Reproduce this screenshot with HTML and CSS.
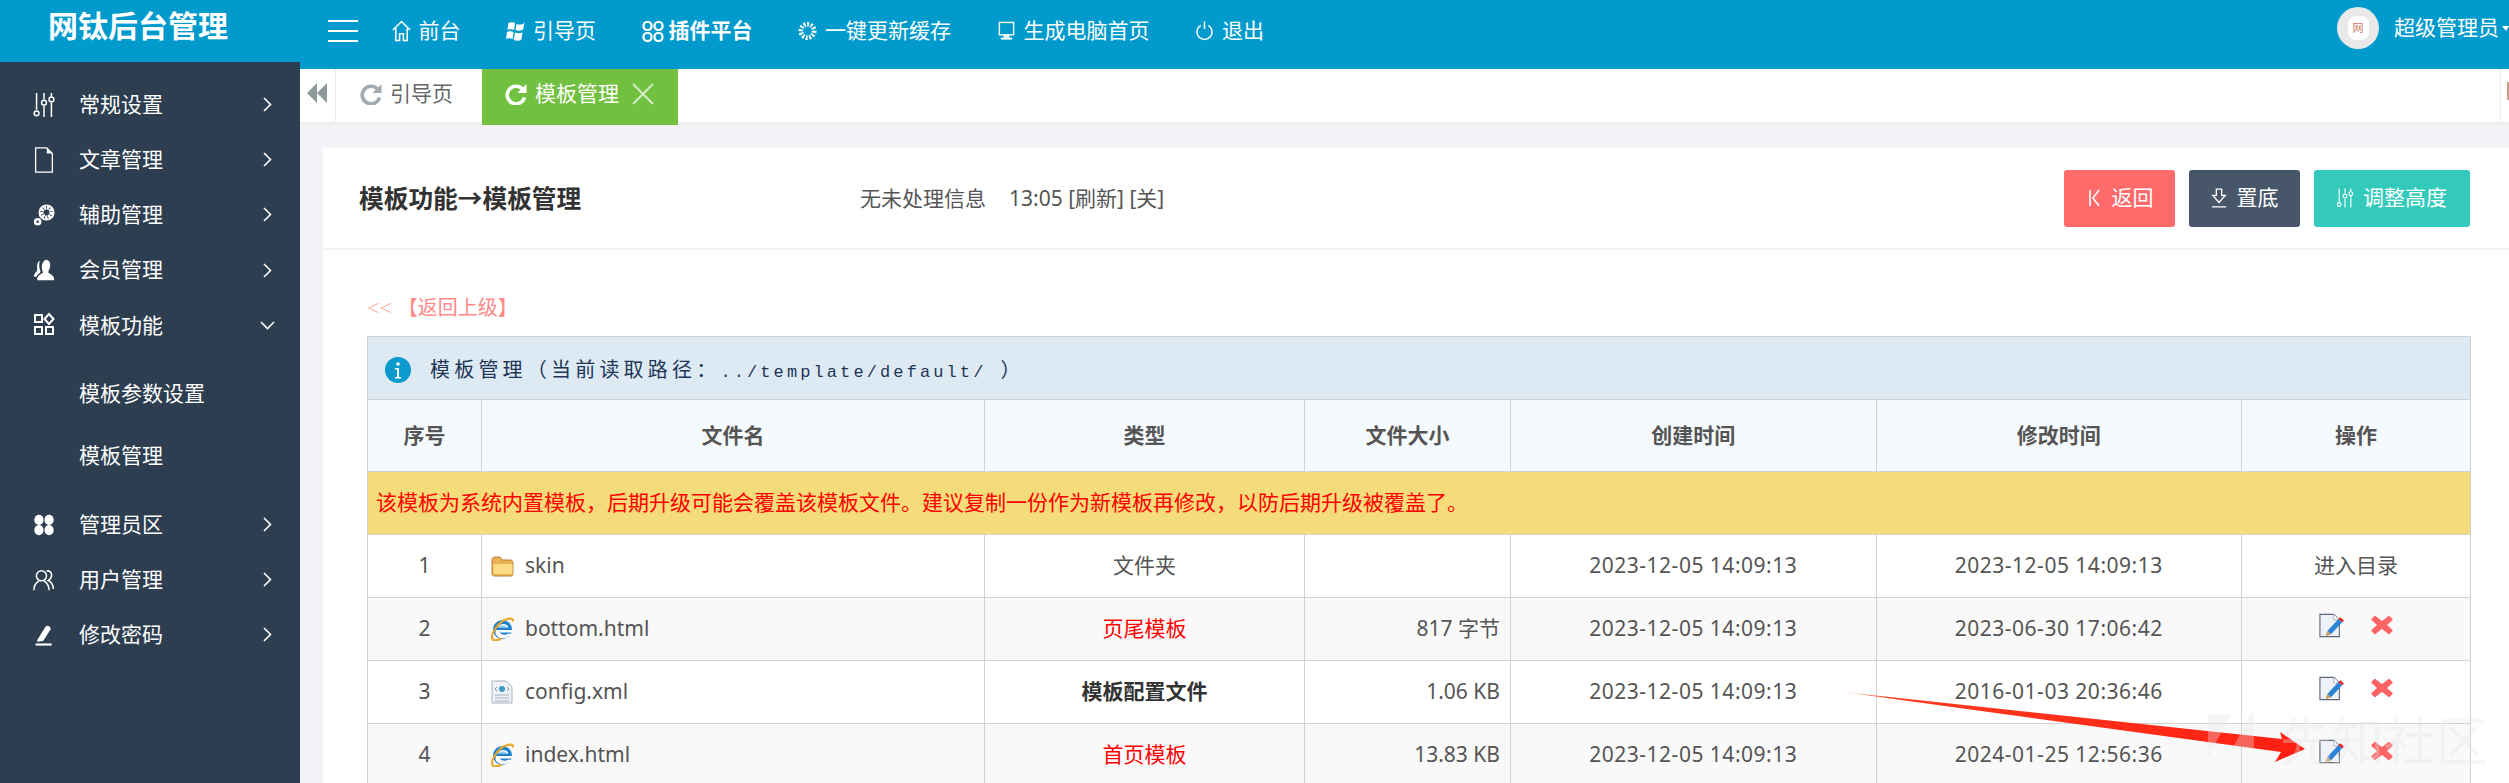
FILE: index.html

```html
<!DOCTYPE html>
<html>
<head>
  <meta charset="utf-8">
  <title>网钛后台管理</title>
  <link rel="stylesheet" href="styles.css">
</head>
<body>
  <svg class="defs" width="0" height="0">
    <defs>
      <symbol id="i-sliders" viewBox="0 0 22 28">
        <g fill="none" stroke="currentColor" stroke-width="1.6">
          <path d="M3 1v18M11 1v7M11 15v12M19 1v4M19 11v16"/>
          <circle cx="3" cy="23" r="2.6"/><circle cx="11" cy="11.5" r="2.6"/><circle cx="19" cy="8" r="2.6"/>
        </g>
      </symbol>
      <symbol id="i-refresh" viewBox="0 0 22 22">
        <path d="M17.500 6A8.800 8.800 0 1 0 19.500 14.500" fill="none" stroke="currentColor" stroke-width="3.600"/>
        <path d="M21.500 1v9h-9z" fill="currentColor"/>
      </symbol>
      <symbol id="i-ie" viewBox="0 0 24 24">
        <circle cx="12.500" cy="12.500" r="9.500" fill="#1c7fd0"/>
        <path d="M8 10.500c1-4.500 9-5 10.500 0z" fill="#fff"/>
        <path d="M8 10.500c1.500-2.500 7.500-3 9 0z" fill="#7cc8f2"/>
        <path d="M6 13h17c-.5 1.500-.5 2-1 2.500H10c1 2.500 6 3 8.500 1l3 .5c-3 5-11 6-15 1.500-1.500-1.500-1-4-.5-5.500z" fill="#fff"/>
        <path d="M2.500 22.500C0 18 8 5 16 2.500c4-1.500 7.500-1.500 7 2" fill="none" stroke="#eaa62f" stroke-width="2.200"/>
        <path d="M2.500 22.500c2 1.500 6 .5 9-1" fill="none" stroke="#eaa62f" stroke-width="2.200"/>
      </symbol>
      <symbol id="i-edit" viewBox="0 0 27 26">
        <path d="M1 1h15l6 6v18H1z" fill="#eef2f8" stroke="#5d6775" stroke-width="1.200"/>
        <path d="M16 1v6h6" fill="#fff" stroke="#a9b2bd" stroke-width="1"/>
        <path d="M9 19l12-13 4 3.500-12 13z" fill="#2b83d8"/>
        <path d="M21 6l2-2 4 3.500-2 2z" fill="#e8211f"/>
        <path d="M9 19l4 3.500-6 2z" fill="#c9985a"/>
      </symbol>
      <symbol id="i-del" viewBox="0 0 22 20">
        <path d="M4 1.500l7 5.500 7-5.500 3 3-6 5.500 6 5.500-3 3-7-5.500-7 5.500-3-3 6-5.500-6-5.500z" fill="#ff6363" stroke="#ff6363" stroke-width="1.500" stroke-linejoin="round"/>
      </symbol>
    </defs>
  </svg>

  <div class="side-col">
    <div class="logo">网钛后台管理</div>
    <ul class="side-menu">
      <li class="side-item">
        <svg class="side-icon"><use href="#i-sliders"/></svg>常规设置
        <svg class="chev" viewBox="0 0 9 15"><path d="M1 1l6.500 6.500L1 14"/></svg>
      </li>
      <li class="side-item">
        <svg class="side-icon" viewBox="0 0 22 28"><path d="M2 1h12l6 6v20H2z" fill="none" stroke="currentColor" stroke-width="1.400"/><path d="M14 1v6h6" fill="currentColor"/></svg>文章管理
        <svg class="chev" viewBox="0 0 9 15"><path d="M1 1l6.500 6.500L1 14"/></svg>
      </li>
      <li class="side-item">
        <svg class="side-icon" viewBox="0 0 26 26"><circle cx="16" cy="10" r="6" fill="none" stroke="currentColor" stroke-width="5" stroke-dasharray="3 1"/><circle cx="16" cy="10" r="8.500" fill="none" stroke="currentColor" stroke-width="2"/><circle cx="5.500" cy="21" r="3" fill="none" stroke="currentColor" stroke-width="3"/></svg>辅助管理
        <svg class="chev" viewBox="0 0 9 15"><path d="M1 1l6.500 6.500L1 14"/></svg>
      </li>
      <li class="side-item">
        <svg class="side-icon" viewBox="0 0 26 26"><path d="M15 1c5 0 6 5 5 9-1 3-2 5-2 6 2 2 7 3 7 8v1H5v-1c0-5 5-6 7-8-2-3-3-12 3-15z" fill="currentColor"/><path d="M8 2C4 4 5 10 5 13c-1 3-4 4-4 8h3c1-3 4-4 5-6-2-4-2-9-1-13z" fill="currentColor"/></svg>会员管理
        <svg class="chev" viewBox="0 0 9 15"><path d="M1 1l6.500 6.500L1 14"/></svg>
      </li>
      <li class="side-item">
        <svg class="side-icon" viewBox="0 0 22 26"><g fill="none" stroke="currentColor" stroke-width="2"><rect x="2" y="3" width="7" height="7"/><path d="M16 2l4.500 5-4.500 5-4.500-5z"/><rect x="2" y="15" width="7" height="7"/><rect x="13" y="15" width="7" height="7"/></g></svg>模板功能
        <svg class="chev chev-down" viewBox="0 0 15 9"><path d="M1 1l6.500 6.500L14 1"/></svg>
      </li>
      <li class="side-sub">
        <a class="sub-link">模板参数设置</a>
        <a class="sub-link">模板管理</a>
      </li>
      <li class="side-item">
        <svg class="side-icon" viewBox="0 0 26 26"><g fill="currentColor"><ellipse cx="7" cy="7" rx="5.500" ry="6"/><ellipse cx="19" cy="7" rx="5.500" ry="6"/><ellipse cx="7" cy="19" rx="5.500" ry="6"/><ellipse cx="19" cy="19" rx="5.500" ry="6"/></g></svg>管理员区
        <svg class="chev" viewBox="0 0 9 15"><path d="M1 1l6.500 6.500L1 14"/></svg>
      </li>
      <li class="side-item">
        <svg class="side-icon" viewBox="0 0 26 26"><g fill="none" stroke="currentColor" stroke-width="1.800"><circle cx="10" cy="8" r="6"/><path d="M1 25c0-6 3-9 6-11M13 14c3 2 6 5 6 11M16 2.500c3-1 6 1 6 5s-2 5-4 6c3 1 6 5 6 10"/></g></svg>用户管理
        <svg class="chev" viewBox="0 0 9 15"><path d="M1 1l6.500 6.500L1 14"/></svg>
      </li>
      <li class="side-item">
        <svg class="side-icon" viewBox="0 0 26 26"><path d="M5 19L15 3c2-2 6 0 6 3L12 20l-7 1z" fill="currentColor"/><rect x="3" y="23" width="19" height="2.500" fill="currentColor"/></svg>修改密码
        <svg class="chev" viewBox="0 0 9 15"><path d="M1 1l6.500 6.500L1 14"/></svg>
      </li>
    </ul>
  </div>

  <div class="main-col">
    <div class="topnav">
      <div class="burger"><span></span><span></span><span></span></div>
      <a class="nav-link">
        <svg class="nav-icon" viewBox="0 0 20 24"><path d="M1 11L10 2l9 9M4 9v13h4v-7h4v7h4V9" fill="none" stroke="currentColor" stroke-width="1.600"/></svg>前台
      </a>
      <a class="nav-link">
        <svg class="nav-icon" viewBox="0 0 20 24"><path d="M2.500 3.500c2-1 5-1 7 0L8.500 11c-2-1-5-1-7 0zM11 4.500c2 1 5 1 7 0l1.500-2-1.500 8c-2 1.500-5 1.500-8 .5zM1 13c2-1 5-1 7 0l-1 7.500c-2-1-5-1-7 0zM9.500 13.500c2 1 5.500 1 8 0l-1.500 8c-2 1-5.500 1-8 0z" fill="currentColor"/></svg>引导页
      </a>
      <a class="nav-link nav-bold">
        <svg class="nav-icon nav-icon-wide" viewBox="0 0 22 24"><g fill="none" stroke="currentColor" stroke-width="2.200"><rect x="1.500" y="3" width="8" height="8" rx="3.500"/><rect x="12.500" y="3" width="8" height="8" rx="3.500"/><rect x="1.500" y="14" width="8" height="8" rx="3.500"/><rect x="12.500" y="14" width="8" height="8" rx="3.500"/></g></svg>插件平台
      </a>
      <a class="nav-link">
        <svg class="nav-icon" viewBox="0 0 20 24"><circle cx="10" cy="12" r="7" fill="none" stroke="currentColor" stroke-width="5" stroke-dasharray="2 1.600"/></svg>一键更新缓存
      </a>
      <a class="nav-link">
        <svg class="nav-icon" viewBox="0 0 20 24"><rect x="2.500" y="3" width="15" height="13" fill="none" stroke="currentColor" stroke-width="1.500"/><rect x="7" y="16" width="6" height="3" fill="currentColor"/><rect x="4" y="19" width="12" height="2" fill="currentColor"/></svg>生成电脑首页
      </a>
      <a class="nav-link">
        <svg class="nav-icon" viewBox="0 0 20 24"><path d="M6 6a8 8 0 1 0 8 0M10 2v8" fill="none" stroke="currentColor" stroke-width="1.600"/></svg>退出
      </a>
      <div class="user">
        <div class="avatar"><span class="avatar-mark">网</span></div>
        超级管理员<i class="caret"></i>
      </div>
    </div>

    <div class="tabbar">
      <div class="tab-toggle"><svg width="21" height="20" viewBox="0 0 21 20"><path d="M10 0v20L0 10zM20 0v20L10 10z" fill="#8d9a9a"/></svg></div>
      <a class="tab"><svg class="tab-icon"><use href="#i-refresh"/></svg>引导页</a>
      <a class="tab tab-active"><svg class="tab-icon"><use href="#i-refresh"/></svg>模板管理<svg class="tab-close" viewBox="0 0 22 22"><path d="M1 1l20 20M21 1L1 21"/></svg></a>
      <div class="tab-end"><span></span></div>
    </div>

    <div class="content">
      <div class="panel">
        <div class="panel-head">
          <div class="panel-title">模板功能→模板管理</div>
          <div class="notice">无未处理信息<span class="notice-time">13:05 [刷新] [关]</span></div>
          <div class="btn-row">
            <a class="btn btn-red"><svg class="btn-icon" viewBox="0 0 12 22"><path d="M2 3v16M11 3L5 11l6 8" fill="none" stroke="#fff" stroke-width="1.600"/></svg>返回</a>
            <a class="btn btn-dark"><svg class="btn-icon" viewBox="0 0 18 22"><path d="M6 1h6v7h4l-7 8-7-8h4zM1 21h16" fill="none" stroke="#fff" stroke-width="1.500"/></svg>置底</a>
            <a class="btn btn-teal btn-wide"><svg class="btn-icon"><use href="#i-sliders"/></svg>调整高度</a>
          </div>
        </div>

        <div class="panel-body">
          <a class="back-link"><span class="back-arrows">&lt;&lt;</span>【返回上级】</a>

          <table class="file-table">
            <colgroup>
              <col class="c-no"><col class="c-name"><col class="c-type"><col class="c-size"><col class="c-time"><col class="c-time"><col class="c-act">
            </colgroup>
            <tr class="row-caption">
              <td colspan="7">
                <div class="caption-in">
                  <svg class="info-icon" viewBox="0 0 26 26"><circle cx="13" cy="13" r="13" fill="#0a9acd"/><circle cx="13" cy="7" r="1.800" fill="#fff"/><path d="M10 11h4v9h2v1.500h-6V20h2v-7.500h-2z" fill="#fff"/></svg>
                  <span class="caption-text">模板管理（当前读取路径：<span class="caption-path">../template/default/</span>）</span>
                </div>
              </td>
            </tr>
            <tr class="row-head">
              <th>序号</th><th>文件名</th><th>类型</th><th>文件大小</th><th>创建时间</th><th>修改时间</th><th>操作</th>
            </tr>
            <tr class="row-warn">
              <td colspan="7">该模板为系统内置模板，后期升级可能会覆盖该模板文件。建议复制一份作为新模板再修改，以防后期升级被覆盖了。</td>
            </tr>
            <tr>
              <td>1</td>
              <td class="cell-name">
                <svg class="file-icon" viewBox="0 0 24 24"><path d="M2 6c0-2 1-3 3-3h5l2 3h8c2 0 3 1 3 3v11c0 1-1 2-2 2H4c-1 0-2-1-2-2z" fill="#e9b04f" stroke="#b9803a" stroke-width="1"/><rect x="3.500" y="10" width="19" height="10" fill="#fbdb84"/></svg>skin
              </td>
              <td>文件夹</td>
              <td class="cell-size"></td>
              <td class="cell-time">2023-12-05 14:09:13</td>
              <td class="cell-time">2023-12-05 14:09:13</td>
              <td>进入目录</td>
            </tr>
            <tr class="row-alt">
              <td>2</td>
              <td class="cell-name"><svg class="file-icon"><use href="#i-ie"/></svg>bottom.html</td>
              <td class="cell-red">页尾模板</td>
              <td class="cell-size">817 字节</td>
              <td class="cell-time">2023-12-05 14:09:13</td>
              <td class="cell-time">2023-06-30 17:06:42</td>
              <td><div class="acts"><svg class="act-edit"><use href="#i-edit"/></svg><svg class="act-del"><use href="#i-del"/></svg></div></td>
            </tr>
            <tr>
              <td>3</td>
              <td class="cell-name">
                <svg class="file-icon" viewBox="0 0 24 24"><path d="M2 1h14l6 6v16H2z" fill="#eef1f6" stroke="#a9b2bd" stroke-width="1"/><path d="M5 9l2-2M5 9l2 2M19 9l-2-2M19 9l-2 2" stroke="#8a94a0" stroke-width="1"/><circle cx="12" cy="9" r="3" fill="#3f9bc9"/><path d="M5 15h14M5 18h14M5 21h14" stroke="#a9b2bd" stroke-width="1.200"/></svg>config.xml
              </td>
              <td class="cell-strong">模板配置文件</td>
              <td class="cell-size">1.06 KB</td>
              <td class="cell-time">2023-12-05 14:09:13</td>
              <td class="cell-time">2016-01-03 20:36:46</td>
              <td><div class="acts"><svg class="act-edit"><use href="#i-edit"/></svg><svg class="act-del"><use href="#i-del"/></svg></div></td>
            </tr>
            <tr class="row-alt">
              <td>4</td>
              <td class="cell-name"><svg class="file-icon"><use href="#i-ie"/></svg>index.html</td>
              <td class="cell-red">首页模板</td>
              <td class="cell-size">13.83 KB</td>
              <td class="cell-time">2023-12-05 14:09:13</td>
              <td class="cell-time">2024-01-25 12:56:36</td>
              <td><div class="acts"><svg class="act-edit"><use href="#i-edit"/></svg><svg class="act-del"><use href="#i-del"/></svg></div></td>
            </tr>
          </table>
        </div>
      </div>
    </div>
  </div>

  <!-- annotation arrow pasted on top of the screenshot -->
  <svg class="arrow" width="2509" height="783" viewBox="0 0 2509 783">
    <defs>
      <linearGradient id="arrowFade" x1="1843" y1="692" x2="2304" y2="749" gradientUnits="userSpaceOnUse">
        <stop offset="0" stop-color="#ffd9b0"/>
        <stop offset="0.1" stop-color="#ff3b20"/>
        <stop offset="1" stop-color="#ff1f12"/>
      </linearGradient>
    </defs>
    <path d="M1843 692L2282 739L2280 732L2305 749L2275 762L2281 752z" fill="url(#arrowFade)"/>
  </svg>

  <div class="watermark">
    <svg class="wm-logo" viewBox="0 0 60 80"><path d="M1 8h26L1 56zM53 0v46H29z" fill="currentColor"/></svg>
    <span>先知社区</span>
  </div>
</body>
</html>
```

FILE: styles.css

```css
* {
  box-sizing: border-box;
  margin: 0;
  padding: 0;
}

html, body {
  height: 100%;
  overflow: hidden;
}

body {
  display: flex;
  background-color: #009acd;
  font-family: "Noto Sans", "Noto Sans CJK SC", sans-serif;
  font-size: 21px;
  line-height: 1.4;
  color: #555;
}

ul {
  list-style: none;
}

.defs {
  position: absolute;
}

/* left column */
.side-col {
  width: 300px;
  flex-shrink: 0;
  display: flex;
  flex-direction: column;
}

.logo {
  height: 62px;
  padding: 4px 0 0 48px;
  font-size: 30px;
  font-weight: 700;
  color: #fff;
  line-height: 44px;
}

.side-menu {
  flex: 1;
  background-color: #2d3e50;
  padding-top: 15px;
  color: #fff;
}

.side-item {
  display: flex;
  align-items: center;
  height: 55.2px;
  padding-left: 33px;
}

.side-icon {
  width: 22px;
  height: 26px;
  margin-right: 24px;
  flex-shrink: 0;
}

.chev {
  width: 9px;
  height: 15px;
  margin-left: auto;
  margin-right: 28px;
  fill: none;
  stroke: #fff;
  stroke-width: 1.6;
}

.chev-down {
  width: 15px;
  height: 9px;
  margin-right: 25px;
}

.side-sub {
  padding: 10px 0 10px;
}

.sub-link {
  display: flex;
  align-items: center;
  height: 62px;
  padding-left: 79px;
}

/* right column */
.main-col {
  flex: 1;
  min-width: 0;
  display: flex;
  flex-direction: column;
}

.topnav {
  height: 69px;
  padding: 0 0 7px 28px;
  display: flex;
  align-items: center;
  gap: 45.500px;
  color: #fff;
}

.burger {
  width: 30px;
  display: flex;
  flex-direction: column;
  gap: 7.500px;
  margin-right: -12px;
}

.burger span {
  height: 2.500px;
  background: #fff;
}

.nav-link {
  display: flex;
  align-items: center;
  gap: 8px;
}

.nav-bold {
  font-weight: 700;
  gap: 5px;
}

.nav-icon {
  width: 19px;
  height: 24px;
}

.nav-icon-wide {
  width: 22px;
}

.user {
  margin-left: auto;
  display: flex;
  align-items: center;
  margin-top: -6px;
}

.avatar {
  width: 42px;
  height: 42px;
  border-radius: 50%;
  background: #e9e9e9;
  margin-right: 15px;
  display: flex;
  align-items: center;
  justify-content: center;
}

.avatar-mark {
  background: #fff;
  color: #cf7a5c;
  font-size: 11px;
  line-height: 24px;
  padding: 0 5px;
  border-radius: 8px;
}

.caret {
  margin-left: 3px;
  border-top: 5px solid #fff;
  border-left: 4px solid transparent;
  border-right: 3px solid transparent;
}

.tabbar {
  height: 56px;
  flex-shrink: 0;
  display: flex;
  background: #fff;
  border-bottom: 3px solid #eee;
}

.tab-toggle {
  width: 36px;
  padding: 12px 0 0 7px;
  border-right: 1px solid #eee;
  height: 53px;
}

.tab {
  height: 56px;
  display: flex;
  align-items: center;
  color: #666;
  padding: 0 29px 6px 24px;
  flex-shrink: 0;
}

.tab-icon {
  width: 22px;
  height: 22px;
  margin-right: 8px;
  color: #a3abb0;
}

.tab-active {
  width: 196px;
  padding: 0 0 6px 23px;
  background: #72c03f;
  color: #fff;
}

.tab-active .tab-icon {
  color: #fff;
}

.tab-close {
  width: 22px;
  height: 22px;
  margin-left: 13px;
  fill: none;
  stroke: #d6ecc8;
  stroke-width: 2;
}

.tab-end {
  margin-left: auto;
  width: 9px;
  height: 53px;
  border-left: 1px solid #eee;
  padding: 13px 0 0 6px;
}

.tab-end span {
  display: block;
  width: 2px;
  height: 18px;
  background: #c99b8a;
}

.content {
  flex: 1;
  min-height: 0;
  overflow: hidden;
  background: #f3f4f8;
  padding: 23px 0 0 23px;
}

.panel {
  height: 100%;
  background: #fff;
}

.panel-head {
  height: 102px;
  display: flex;
  align-items: center;
  padding: 0 39px 0 36px;
  border-bottom: 2px solid #f1f1f1;
}

.panel-title {
  width: 222px;
  padding-top: 3px;
  font-size: 24.700px;
  font-weight: 700;
  color: #333;
  white-space: nowrap;
}

.notice {
  margin-left: 279px;
  padding-top: 2px;
  white-space: nowrap;
}

.notice-time {
  margin-left: 23px;
}

.btn-row {
  margin-left: auto;
  display: flex;
  gap: 14px;
}

.btn {
  width: 111px;
  height: 57px;
  border-radius: 3px;
  display: flex;
  align-items: center;
  justify-content: center;
  gap: 10px;
  color: #fff;
}

.btn-wide {
  width: 156px;
}

.btn-red {
  background: #ff6a6a;
}

.btn-dark {
  background: #48566a;
}

.btn-teal {
  background: #33cabb;
}

.btn-icon {
  width: 16px;
  height: 22px;
}

.panel-body {
  padding: 42px 39px 0 44px;
}

.back-link {
  display: block;
  height: 44px;
  font-family: "Liberation Serif", "Noto Sans CJK SC", serif;
  font-size: 20px;
  line-height: 32px;
  color: #ff8a8a;
}

.back-arrows {
  margin-right: 6px;
  font-size: 22px;
  color: #ffb0a0;
}

.file-table {
  width: 2103px;
  border-collapse: collapse;
  table-layout: fixed;
}

.c-no { width: 114px; }
.c-name { width: 503px; }
.c-type { width: 320px; }
.c-size { width: 206px; }
.c-time { width: 365.500px; }
.c-act { width: 229px; }

.file-table td,
.file-table th {
  height: 63px;
  border: 1px solid #d2d2d2;
  text-align: center;
  vertical-align: middle;
  padding: 0 12px;
  white-space: nowrap;
}

.row-alt td {
  background: #f9f9f9;
}

.row-head th {
  height: 72px;
  background: #f5fafe;
  color: #555;
}

.file-table .row-caption td {
  background: #deeaf3;
  text-align: left;
  padding: 5px 17px 0;
}

.caption-in {
  display: flex;
  align-items: center;
}

.info-icon {
  width: 26px;
  height: 26px;
  margin-right: 19px;
}

.caption-text {
  font-size: 20px;
  letter-spacing: 4.200px;
  color: #1d3557;
}

.caption-path {
  font-family: "Liberation Mono", monospace;
  font-size: 17px;
  letter-spacing: 3.100px;
  margin-right: 14px;
}

.file-table .row-warn td {
  background: #f5dc7a;
  color: #f00;
  text-align: left;
  padding: 0 8px;
}

.file-table .cell-name {
  text-align: left;
  padding-left: 8px;
}

.file-icon {
  width: 24px;
  height: 24px;
  margin-right: 11px;
  vertical-align: -5px;
}

.cell-red {
  color: #f00;
}

.cell-strong {
  font-weight: 700;
  color: #333;
}

.cell-time {
  letter-spacing: 0.500px;
}

.file-table .cell-size {
  text-align: right;
  padding-right: 10px;
}

.acts {
  display: flex;
  justify-content: center;
  gap: 27px;
  padding-bottom: 7px;
}

.act-edit {
  width: 25px;
  height: 25px;
}

.act-del {
  width: 22px;
  height: 20px;
  margin-top: 2px;
}

/* things pasted over the page */
.arrow {
  position: absolute;
  top: 0;
  left: 0;
  pointer-events: none;
}

.watermark {
  position: absolute;
  left: 2207px;
  top: 703px;
  display: flex;
  align-items: flex-start;
  gap: 20px;
  color: rgba(228, 228, 228, 0.34);
  font-size: 52px;
  line-height: 76px;
  pointer-events: none;
}

.wm-logo {
  width: 53px;
  height: 80px;
}
```
